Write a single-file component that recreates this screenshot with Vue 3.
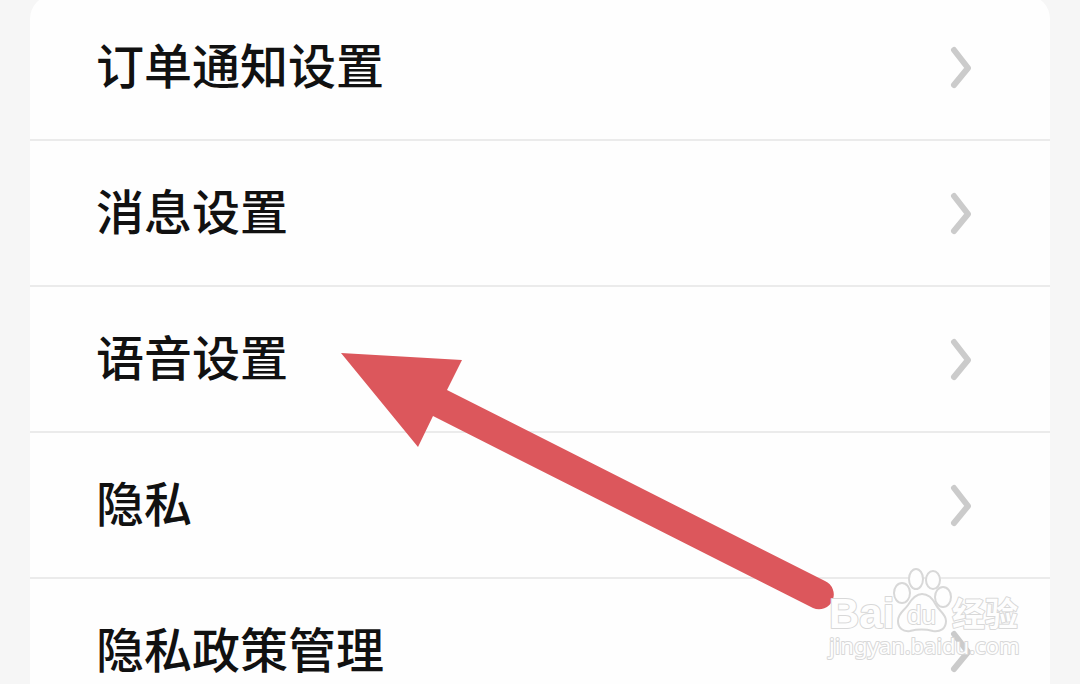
<script setup>
const items = ['订单通知设置', '消息设置', '语音设置', '隐私', '隐私政策管理']
</script>

<template>
  <main class="screen">
    <nav class="card">
      <a v-for="item in items" :key="item" class="row" href="#">
        <span class="label">{{ item }}</span>
        <svg class="chevron" viewBox="0 0 24 44" aria-hidden="true">
          <path d="M4 5 L18 23 L4 40" />
        </svg>
      </a>
    </nav>

    <svg class="arrow" viewBox="0 0 494 258" aria-hidden="true">
      <path d="M1 1 L122 8 L107 38 L485 229 A14 14 0 0 1 473 256 L93 64 L78 95 Z" />
    </svg>

    <svg class="watermark" viewBox="0 0 200 96" aria-label="Baidu 经验">
      <g class="outline">
        <text class="brand" x="3" y="61">Bai</text>
        <ellipse cx="76" cy="26" rx="8" ry="10" />
        <ellipse cx="90" cy="12" rx="7" ry="10" />
        <ellipse cx="107" cy="13" rx="7" ry="9" />
        <ellipse cx="117" cy="30" rx="8" ry="10" />
        <path d="M96 27 C89 27 85 33 82 38 C78 44 72 46 72 54 C72 61 77 65 84 64 C92 62 99 62 107 64 C114 65 120 62 120 54 C120 47 113 44 110 38 C107 32 103 27 96 27 Z" />
        <text class="du" x="81" y="57">du</text>
        <text class="cn" x="126" y="59">经验</text>
        <text class="site" x="3" y="87">jingyan.baidu.com</text>
      </g>
    </svg>
  </main>
</template>

<style>
body {
  background: #f6f6f6;
}
</style>

<style scoped>
.screen {
  position: relative;
  height: 100vh;
  overflow: hidden;
  background: #f6f6f6;
  font-family: "Noto Sans CJK SC", "Liberation Sans", sans-serif;
}
.card {
  margin: -5px 30px 0;
  border-radius: 24px;
  background: #fefefe;
}
.row {
  display: flex;
  align-items: center;
  justify-content: space-between;
  box-sizing: border-box;
  height: 146px;
  padding: 0 76px 0 66px;
  border-bottom: 2px solid #ebebeb;
  color: #111;
  text-decoration: none;
}
.label {
  padding-bottom: 8px;
  font-size: 48px;
  font-weight: 500;
  line-height: 72px;
}
.chevron {
  width: 24px;
  height: 44px;
  fill: none;
  stroke: #cbcbcb;
  stroke-width: 6px;
  stroke-linecap: round;
  stroke-linejoin: round;
}
.arrow {
  position: absolute;
  left: 340px;
  top: 352px;
  width: 494px;
  height: 258px;
  fill: #dc575c;
}
.watermark {
  position: absolute;
  left: 826px;
  top: 567px;
  width: 200px;
  height: 96px;
}
.outline {
  fill: #fefefe;
  stroke: #d8d8d8;
  stroke-width: 2px;
  stroke-linejoin: round;
  paint-order: stroke;
}
.outline ellipse,
.outline path {
  paint-order: normal;
}
.brand {
  font: bold 42px "Liberation Sans", sans-serif;
}
.du {
  font: 26px "Liberation Sans", sans-serif;
}
.cn {
  font: bold 33px "Noto Sans CJK SC", sans-serif;
}
.site {
  font: 22px "Noto Sans", sans-serif;
}
</style>
